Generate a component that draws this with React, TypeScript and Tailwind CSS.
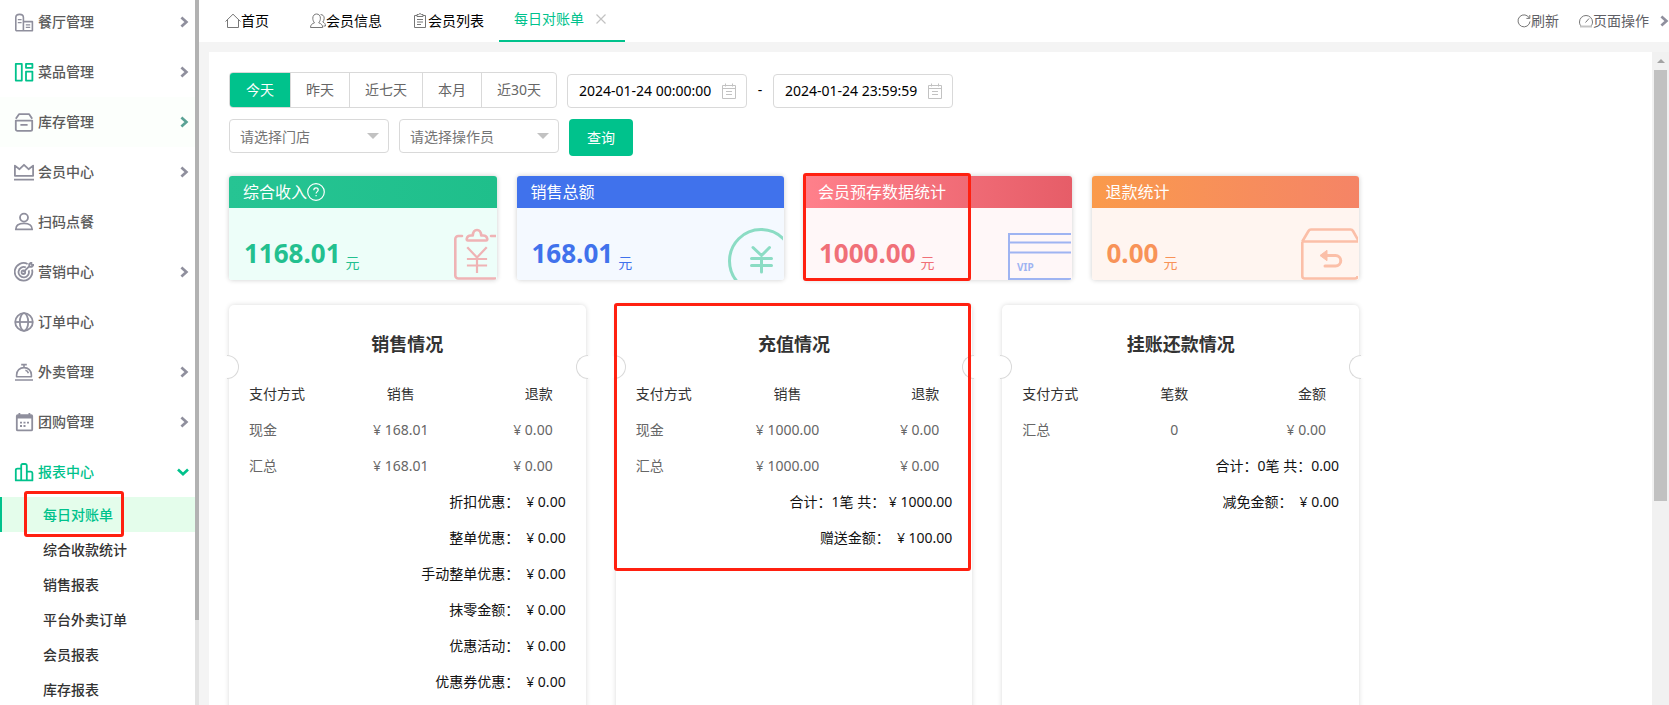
import { ReactNode } from 'react'

type MenuItem = { label: string; icon: ReactNode; arrow?: boolean; state?: 'hover' | 'open' }
type Table = { title: string; head: string[]; rows: string[][]; totals: [string, string][]; marked?: boolean }

function Glyph({ children, green = false }: { children: ReactNode; green?: boolean }) {
  return (
    <svg
      viewBox="0 0 20 20"
      className={`h-5 w-5 shrink-0 ${green ? 'text-[#00c28c]' : 'text-[#8f8f9d]'}`}
      fill="none"
      stroke="currentColor"
      strokeWidth="1.8"
      strokeLinejoin="round"
      aria-hidden="true"
    >
      {children}
    </svg>
  )
}

const menu: MenuItem[] = [
  {
    label: '餐厅管理',
    arrow: true,
    icon: (
      <Glyph>
        <path d="M1.8 18.8V5.6C1.8 3.6 3.4 2.4 5.6 2.4s3.800 1.200 3.800 3.200v13.200M9.400 9.600h9v9.200H1.800" strokeWidth="1.6" />
        <path d="M3.8 7.6h3.8M3.8 10.6h3.8M11.8 12.8h4.4M11.8 15.4h4.4" strokeWidth="1.3" />
      </Glyph>
    ),
  },
  {
    label: '菜品管理',
    arrow: true,
    icon: (
      <Glyph green>
        <path d="M1.8 1.8h6v16.8h-6zM12 1.8h6.4v4H12zM12 9.6h6.4v9H12z" />
      </Glyph>
    ),
  },
  {
    label: '库存管理',
    arrow: true,
    state: 'hover',
    icon: (
      <Glyph>
        <path d="M1.8 6.8 5 2.2h10.2l3 4.6M1.8 8.6h16.4v8.6a1.6 1.6 0 0 1-1.6 1.6H3.4a1.6 1.6 0 0 1-1.6-1.6zM6.4 12.8h7.2" />
      </Glyph>
    ),
  },
  {
    label: '会员中心',
    arrow: true,
    icon: (
      <Glyph>
        <path d="M.9 13.8V3.6l4.6 3.6L10 2.8l4.6 4.4 4.5-3.6v10.2zM0 17.6h20" />
      </Glyph>
    ),
  },
  {
    label: '扫码点餐',
    icon: (
      <Glyph>
        <circle cx="10" cy="5.6" r="4" />
        <path d="M1.8 17.4c0-4 3-6 8.2-6s8.2 2 8.2 6z" />
      </Glyph>
    ),
  },
  {
    label: '营销中心',
    arrow: true,
    icon: (
      <Glyph>
        <path d="M13.6 2A8.8 8.8 0 1 0 18 7.4M11.8 5.4a5.2 5.2 0 1 0 2.8 3M9.4 10.2l6-6M15.2 4.6V2l2.2-1.600v2.400h2.200L18 4.800z" />
        <circle cx="9.4" cy="10.2" r="1.8" />
      </Glyph>
    ),
  },
  {
    label: '订单中心',
    icon: (
      <Glyph>
        <circle cx="10" cy="10" r="8.8" />
        <ellipse cx="10" cy="10" rx="4.2" ry="8.8" />
        <path d="M1.2 10h17.6" />
      </Glyph>
    ),
  },
  {
    label: '外卖管理',
    arrow: true,
    icon: (
      <Glyph>
        <path d="M2.6 14.8V13c0-4.4 3.2-7.4 7.4-7.4s7.4 3 7.4 7.4v1.8zM1 18h18M7.2 2.6h5.6M10 2.6v3M11.4 8.2c1.6.4 2.6 1.4 3 3" strokeWidth="1.6" />
      </Glyph>
    ),
  },
  {
    label: '团购管理',
    arrow: true,
    icon: (
      <Glyph>
        <rect x="2.8" y="3.2" width="15.4" height="15.2" rx="1" />
        <path d="M2.8 5h15.4" strokeWidth="3" />
        <path d="M5.4 1v3M15.4 1v3" />
        <path d="M6 10.6h2M9.5 10.6h2M13 10.6h2M6 14h2M9.5 14h2" />
      </Glyph>
    ),
  },
  {
    label: '报表中心',
    arrow: true,
    state: 'open',
    icon: (
      <Glyph green>
        <path d="M7.2 18.4V3.6c0-1 .6-1.6 1.4-1.6h2.8c.8 0 1.4.6 1.4 1.6v14.8M7.2 6.6H3.4c-1 0-1.6.6-1.6 1.4v10.4h16.6v-7.2c0-1-.6-1.6-1.4-1.6h-4.2" />
      </Glyph>
    ),
  },
]

const reports = ['每日对账单', '综合收款统计', '销售报表', '平台外卖订单', '会员报表', '库存报表']

const ranges = ['今天', '昨天', '近七天', '本月', '近30天']

const tables: Table[] = [
  {
    title: '销售情况',
    head: ['支付方式', '销售', '退款'],
    rows: [
      ['现金', '¥ 168.01', '¥ 0.00'],
      ['汇总', '¥ 168.01', '¥ 0.00'],
    ],
    totals: [
      ['折扣优惠：', '¥ 0.00'],
      ['整单优惠：', '¥ 0.00'],
      ['手动整单优惠：', '¥ 0.00'],
      ['抹零金额：', '¥ 0.00'],
      ['优惠活动：', '¥ 0.00'],
      ['优惠券优惠：', '¥ 0.00'],
    ],
  },
  {
    title: '充值情况',
    head: ['支付方式', '销售', '退款'],
    rows: [
      ['现金', '¥ 1000.00', '¥ 0.00'],
      ['汇总', '¥ 1000.00', '¥ 0.00'],
    ],
    totals: [
      ['合计：1笔 共： ¥ 1000.00', ''],
      ['赠送金额：', '¥ 100.00'],
    ],
    marked: true,
  },
  {
    title: '挂账还款情况',
    head: ['支付方式', '笔数', '金额'],
    rows: [['汇总', '0', '¥ 0.00']],
    totals: [
      ['合计：0笔 共：0.00', ''],
      ['减免金额：', '¥ 0.00'],
    ],
  },
]

function Chevron({ down = false, className }: { down?: boolean; className: string }) {
  return (
    <svg viewBox="0 0 12 12" className={`h-3 w-3 shrink-0 ${className}`} fill="none" stroke="currentColor" strokeWidth="2.7" aria-hidden="true">
      <path d={down ? 'M1 3.6l5 4.6 5-4.6' : 'M4.4 1.4L9.4 6l-5 4.6'} />
    </svg>
  )
}

function Sidebar() {
  return (
    <aside className="flex w-[199px] shrink-0 overflow-hidden bg-white">
      <nav className="-mt-[3px] flex-1">
        {menu.map((item) => (
          <a
            key={item.label}
            href="#"
            className={`flex h-[50px] items-center gap-1 pr-[6px] pl-[14px] text-sm font-medium ${
              item.state === 'open' ? 'text-[#00c28c]' : item.state === 'hover' ? 'bg-[#fcfffc] text-[#5a5a5a]' : 'text-[#5a5a5a]'
            }`}
          >
            {item.icon}
            <span className="flex-1">{item.label}</span>
            {item.arrow && (
              <Chevron
                down={item.state === 'open'}
                className={item.state === 'open' ? 'text-[#00c28c]' : item.state === 'hover' ? 'text-[#5aa295]' : 'text-[#8f8f9d]'}
              />
            )}
          </a>
        ))}
        {reports.map((label, i) => (
          <a
            key={label}
            href="#"
            className={`relative flex h-[35px] items-center border-l-2 pl-[41px] text-sm font-medium ${
              i === 0 ? 'border-[#00c28c] bg-[#e4fdeb] text-[#00c28c]' : 'border-transparent text-[#333]'
            }`}
          >
            {label}
            {i === 0 && <span className="absolute -top-[6px] left-[22px] z-10 h-[46px] w-[100px] rounded-[3px] border-3 border-[#ff2010]" />}
          </a>
        ))}
      </nav>
      <div className="w-1 bg-[#e3e3e3]">
        <div className="h-[88%] bg-[#b2b2b2]" />
      </div>
    </aside>
  )
}

function Header() {
  return (
    <header className="flex h-[42px] shrink-0 items-center justify-between bg-white pl-3 text-sm text-black">
      <nav className="flex h-full items-center">
        <a href="#" className="flex min-w-[84px] items-center px-[14px]">
          <svg viewBox="0 0 16 16" className="h-4 w-4 shrink-0" fill="none" stroke="#777" aria-hidden="true">
            <path d="M.5 8.5 8 1.2l7.5 7.3M2.5 7v7.5h11V7" />
          </svg>
          首页
        </a>
        <a href="#" className="flex items-center px-[15px]">
          <svg viewBox="0 0 16 16" className="h-4 w-4 shrink-0" fill="none" stroke="#777" aria-hidden="true">
            <path d="M.5 14.5c0-2.6 1.6-3.9 4-4.7C3.4 8.6 2.8 7 2.8 5.2 2.8 2.6 4.4 1 6.6 1s3.8 1.6 3.8 4.2c0 1.8-.6 3.4-1.7 4.6 2.4.8 4 2.1 4 4.7zM10.6 1.6c2 0 3.600 1.200 3.600 3.600 0 1.500-.5 2.800-1.400 3.800 1.700.8 2.700 1.900 2.700 4h-2" />
          </svg>
          会员信息
        </a>
        <a href="#" className="flex items-center px-[15px]">
          <svg viewBox="0 0 16 16" className="h-4 w-4 shrink-0" fill="none" stroke="#777" aria-hidden="true">
            <path d="M5 2.5H2.5v12h11v-12H11M5 1.5h1.5L8 .5l1.5 1H11v2H5zM5 6.5h6M5 9h6M5 11.5h4" />
          </svg>
          会员列表
        </a>
        <div className="flex h-full items-center border-b-2 border-[#00c28c] px-[15px] pb-0.5 text-[#00c28c]">
          <a href="#">每日对账单</a>
          <button type="button" aria-label="关闭" className="ml-3 pr-1">
            <svg viewBox="0 0 10 10" className="h-[10px] w-[10px]" stroke="#c2c2c2" strokeWidth="1.2" aria-hidden="true">
              <path d="M.5.5l9 9M9.5.5l-9 9" />
            </svg>
          </button>
        </div>
      </nav>
      <div className="flex items-center gap-5 text-[#5f5f66]">
        <button type="button" className="flex items-center">
          <svg viewBox="0 0 14 14" className="h-[14px] w-[14px]" fill="none" stroke="#777" aria-hidden="true">
            <path d="M12.4 4.2A6 6 0 1 0 13 7.4M12.8 1v3.4H9.4" />
          </svg>
          刷新
        </button>
        <button type="button" className="flex items-center">
          <svg viewBox="0 0 14 14" className="h-[14px] w-[14px]" fill="none" stroke="#777" aria-hidden="true">
            <path d="M2 12C1 11 .5 9.7.5 8a6.500 6.500 0 0 1 13 0c0 1.700-.5 3-1.500 4M6.500 8.500 10 4.500" />
            <path d="M1 12.5h12" stroke="#c4c4c4" strokeWidth="2" />
          </svg>
          页面操作
          <Chevron className="ml-2 text-[#8f8f9d]" />
        </button>
      </div>
    </header>
  )
}

function DateInput({ label, value }: { label: string; value: string }) {
  return (
    <label className="flex h-[34px] w-[180px] items-center rounded-sm border border-[#d9d9d9] pr-[10px] pl-[11px]">
      <input aria-label={label} defaultValue={value} className="w-0 flex-1 bg-transparent text-black outline-none" />
      <svg viewBox="0 0 14 16" className="h-4 w-[14px] shrink-0" fill="none" stroke="#c2c2c2" aria-hidden="true">
        <path d="M.5 2.5h13v13H.5zM.5 5.5h13M3.5.5v3M10.5.5v3M4 8.5h6M4 11.5h6" />
      </svg>
    </label>
  )
}

function Picker({ text }: { text: string }) {
  return (
    <div className="relative w-[160px]">
      <select aria-label={text} className="h-[34px] w-full appearance-none rounded-sm border border-[#d9d9d9] bg-white pt-0.5 pl-[10px] text-[#757575] outline-none">
        <option>{text}</option>
      </select>
      <span className="pointer-events-none absolute top-[14px] right-[10px] border-x-6 border-t-6 border-x-transparent border-t-[#c2c2c2]" />
    </div>
  )
}

function Filters() {
  return (
    <form className="text-sm">
      <div className="flex items-end gap-[10px]">
        <div className="flex overflow-hidden rounded-sm border border-[#d9d9d9]">
          {ranges.map((range, i) => (
            <button
              key={range}
              type="button"
              className={`h-[34px] ${i === 0 ? 'bg-[#00c28c] px-4 text-white' : 'border-l border-[#d9d9d9] px-[15px] text-[#666]'}`}
            >
              {range}
            </button>
          ))}
        </div>
        <DateInput label="开始时间" value="2024-01-24 00:00:00" />
        <span className="w-1.5 self-center text-center text-black">-</span>
        <DateInput label="结束时间" value="2024-01-24 23:59:59" />
      </div>
      <div className="mt-[11px] flex items-start gap-[10px]">
        <Picker text="请选择门店" />
        <Picker text="请选择操作员" />
        <button type="button" className="h-[37px] w-16 rounded-sm bg-[#00c28c] text-white">
          查询
        </button>
      </div>
    </form>
  )
}

function StatCard({ title, value, head, body, art, help = false, marked = false }: {
  title: string
  value: string
  head: string
  body: string
  art: ReactNode
  help?: boolean
  marked?: boolean
}) {
  return (
    <section className="relative">
      <div className="overflow-hidden rounded-[3px] shadow-[0_0_5px_rgba(0,0,0,0.2)]">
        <h2 className={`flex h-8 items-center px-[14px] text-base text-white ${head}`}>
          {title}
          {help && (
            <svg viewBox="0 0 18 18" className="h-[18px] w-[18px]" fill="none" stroke="white" strokeWidth="1.2" role="img" aria-label="说明">
              <circle cx="9" cy="9" r="8.3" />
              <path d="M6.8 7.2c0-1.5 1-2.3 2.2-2.3s2.2.8 2.2 2c0 1.7-2.1 1.7-2.1 3.7M9.1 11.9v1.4" />
            </svg>
          )}
        </h2>
        <div className={`flex h-[72px] items-end justify-between pr-px pl-[15px] ${body}`}>
          <p className="flex items-end gap-[5px] pb-[7px]">
            <strong className="text-[26px] leading-10 font-bold">{value}</strong>
            <span className="text-sm">元</span>
          </p>
          {art}
        </div>
      </div>
      {marked && <span className="absolute -top-[3px] -left-px h-[108px] w-[168px] rounded-[3px] border-3 border-[#ff2010]" />}
    </section>
  )
}

const clipboardArt = (
  <svg viewBox="0 0 42 52" className="h-[52px] w-[42px]" fill="none" stroke="#efb3b5" strokeWidth="2.6" strokeLinecap="round" strokeLinejoin="round" aria-hidden="true">
    <path d="M8 8H4.3a3 3 0 0 0-3 3v36.5a3 3 0 0 0 3 3H44M37 8h6" />
    <path d="M14 12.5c-1.2 0-1.5-.8-1.2-2 .5-2.2 1.5-3 4-3h2C19 4 20.5 2 23 2s4 2 4.2 5.500h2c2.500 0 3.500.8 4 3 .3 1.200 0 2-1.200 2z" />
    <path d="M14 20l9 9.5 9-9.500M23 29.500V44M14 31h18M14 37.500h18" strokeLinecap="square" strokeWidth="2.2" />
  </svg>
)

const coinArt = (
  <svg viewBox="0 0 55 52" className="h-[52px] w-[55px]" fill="none" stroke="#8bdcc4" strokeWidth="3" strokeLinecap="round" aria-hidden="true">
    <circle cx="33" cy="33" r="31.5" />
    <path d="M25 19.5l8.5 8 8-8M33.5 27.5V44M23.5 30.5h20M23.5 37.5h20" />
  </svg>
)

const vipArt = (
  <svg viewBox="0 0 63 48" className="h-12 w-[63px]" fill="none" stroke="#9fb4f2" strokeWidth="2" aria-hidden="true">
    <path d="M64 2H1v45h63M1 10.5h63M1 20.5h63" />
    <text x="9" y="39" fill="#9fb4f2" stroke="none" className="text-[10px] font-bold">
      VIP
    </text>
  </svg>
)

const refundArt = (
  <svg viewBox="0 0 57 52" className="h-[52px] w-[57px]" fill="none" stroke="#fbbfa8" strokeWidth="2.6" strokeLinejoin="round" aria-hidden="true">
    <path d="M1.3 13.5 7.5 3A3 3 0 0 1 10 1.5h39.5A3 3 0 0 1 52 3l6 10.5M1.3 13.5h57M1.3 13.5V48a2.5 2.5 0 0 0 2.5 2.5H54a2.5 2.5 0 0 0 2.5-2.5" />
    <path d="M26 27.5h8.5a5 5 0 0 1 0 10.500H24" strokeWidth="3" strokeLinecap="round" />
    <path d="M19 27.5l7-5.2v10.4z" fill="#fbbfa8" strokeWidth="1" />
  </svg>
)

function DetailCard({ table }: { table: Table }) {
  return (
    <section className="relative rounded-[5px] bg-white pb-10 shadow-[0_0_5px_rgba(0,0,0,0.15)]">
      {/* ticket notches on both edges */}
      <span className="absolute top-[50px] -left-[2px] h-6 w-3 rounded-r-[12px] border border-l-0 border-[#d9d9d9] bg-white shadow-[-6px_0_0_white]" />
      <span className="absolute top-[50px] -right-[2px] h-6 w-3 rounded-l-[12px] border border-r-0 border-[#d9d9d9] bg-white shadow-[6px_0_0_white]" />
      <h3 className="pt-[25px] text-center text-lg leading-7 font-bold text-[#333]">{table.title}</h3>
      <div className="mt-[18px] pr-[33px] pl-5">
        <table className="w-full table-fixed text-sm text-[#666]">
          <thead className="text-[#333]">
            <tr className="h-9">
              <th className="text-left font-normal">{table.head[0]}</th>
              <th className="text-center font-normal">{table.head[1]}</th>
              <th className="text-right font-normal">{table.head[2]}</th>
            </tr>
          </thead>
          <tbody>
            {table.rows.map((row) => (
              <tr key={row[0]} className="h-9">
                <td>{row[0]}</td>
                <td className="text-center">{row[1]}</td>
                <td className="text-right">{row[2]}</td>
              </tr>
            ))}
          </tbody>
        </table>
      </div>
      <ul className="px-5 text-sm text-[#111]">
        {table.totals.map(([label, value]) => (
          <li key={label} className="flex h-9 items-center justify-end">
            {label}
            {value && <span className="ml-[7px]">{value}</span>}
          </li>
        ))}
      </ul>
      {table.marked && <span className="absolute -top-[2px] -left-[2px] h-[268px] w-[357px] rounded-[3px] border-3 border-[#ff2010]" />}
    </section>
  )
}

export default function App() {
  return (
    <div className="flex h-screen overflow-hidden bg-[#f4f4f4] font-['Noto_Sans','Noto_Sans_CJK_SC',sans-serif]">
      <Sidebar />
      <div className="flex min-w-0 flex-1 flex-col">
        <Header />
        <div className="flex min-h-0 flex-1 pt-[10px] pl-[10px]">
          <main className="min-w-0 flex-1 overflow-hidden bg-white p-5">
            <Filters />
            <div className="mt-5 grid max-w-[1130px] grid-cols-4 gap-5">
              <StatCard title="综合收入" value="1168.01" head="bg-linear-to-r from-[#26c493] to-[#1fbf8b]" body="bg-[#edfef9] text-[#23c08f]" art={clipboardArt} help />
              <StatCard title="销售总额" value="168.01" head="bg-[#4072ec]" body="bg-[#f4f9ff] text-[#4072ec]" art={coinArt} />
              <StatCard title="会员预存数据统计" value="1000.00" head="bg-linear-to-r from-[#ff808b] to-[#e65d68]" body="bg-[#fff7f8] text-[#f07078]" art={vipArt} marked />
              <StatCard title="退款统计" value="0.00" head="bg-linear-to-r from-[#fa9a4b] to-[#f58466]" body="bg-[#fff5f0] text-[#f89358]" art={refundArt} />
            </div>
            <div className="mt-[25px] grid max-w-[1130px] grid-cols-3 gap-[30px]">
              {tables.map((table) => (
                <DetailCard key={table.title} table={table} />
              ))}
            </div>
          </main>
          <div className="flex w-[17px] shrink-0 flex-col bg-[#f1f1f1] px-[2px]">
            <span className="mx-auto my-[7px] border-x-4 border-b-4 border-x-transparent border-b-[#a3a3a3]" />
            <div className="h-[66%] bg-[#c1c1c1]" />
          </div>
        </div>
      </div>
    </div>
  )
}
